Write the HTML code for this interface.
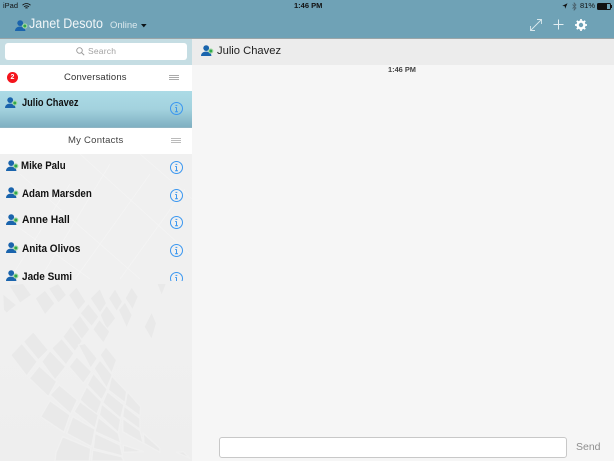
<!DOCTYPE html>
<html><head><meta charset="utf-8"><style>
html,body{margin:0;padding:0;width:614px;height:461px;overflow:hidden;background:#f6f6f6;font-family:"Liberation Sans",sans-serif}
.a{position:absolute;white-space:nowrap}
.n{font-weight:bold;font-size:11px;color:#111;line-height:14px;transform-origin:0 50%}
svg{position:absolute}
</style></head><body>
<svg width="0" height="0" style="position:absolute"><defs>
<g id="u"><circle cx="5.2" cy="3.1" r="2.9" fill="#1a64ad"/><path d="M0 11C0 7.8 2.6 6.6 5.2 6.6C7.8 6.6 10.4 7.8 10.4 11Z" fill="#1a64ad"/><circle cx="9.8" cy="6" r="2.6" fill="#a8d8a8"/><circle cx="9.8" cy="6" r="1.5" fill="#2fa84a"/></g>
<g id="i"><circle cx="6.5" cy="6.5" r="6" fill="none" stroke="#3b97f0" stroke-width="1"/><path d="M5.5 3.4H7.3M6.5 5.3V9.8M5.2 5.5H6.5M5 9.8H8" stroke="#3b97f0" stroke-width="1" fill="none"/></g>
</defs></svg>

<!-- header -->
<div class="a" style="left:0;top:0;width:614px;height:38px;background:#6fa2b6"></div>
<div class="a" style="left:0;top:38px;width:614px;height:1px;background:#9aa5a8"></div>
<div class="a" style="left:3px;top:1px;font-size:7.5px;line-height:10px;color:#111">iPad</div>
<svg style="left:22px;top:3px" width="9" height="7"><path d="M0.5 2.2C3 0 6 0 8.5 2.2M2 3.8C3.5 2.6 5.5 2.6 7 3.8M3.4 5.2C4 4.7 5 4.7 5.6 5.2" stroke="#111" fill="none" stroke-width="0.9"/></svg>
<div class="a" style="left:294px;top:1px;font-size:7.5px;line-height:10px;color:#111;font-weight:bold">1:46 PM</div>
<svg style="left:562px;top:3px" width="6" height="6"><path d="M5.5 0.3L0.3 2.9L2.8 3.2L3.1 5.7Z" fill="#111"/></svg>
<svg style="left:572px;top:2px" width="5" height="9"><path d="M0.5 2.5L4 6L2.2 8V1L4 3L0.5 6.5" stroke="#49606b" fill="none" stroke-width="0.8"/></svg>
<div class="a" style="left:580px;top:1px;font-size:7.5px;line-height:10px;color:#111">81%</div>
<div class="a" style="left:597px;top:3px;width:12px;height:5px;border:1px solid #111;border-radius:1.5px"></div>
<div class="a" style="left:598px;top:4px;width:9px;height:5px;background:#111"></div>
<div class="a" style="left:611px;top:5px;width:1px;height:3px;background:#111"></div>

<svg style="left:15px;top:20px" width="13" height="12"><use href="#u"/></svg>
<div class="a" style="left:29px;top:15px;font-size:13.5px;line-height:18px;color:#f1f6f8;transform:scaleX(.93);transform-origin:0 50%">Janet Desoto</div>
<div class="a" style="left:110px;top:20px;font-size:9.5px;line-height:12px;color:#dce9ee">Online</div>
<svg style="left:141px;top:24px" width="6" height="4"><path d="M0 0H5.6L2.8 3.4Z" fill="#0c1418"/></svg>

<svg style="left:530px;top:19px" width="12" height="12"><path d="M0.5 11.5L11.5 0.5M7 0.5H11.5V5M0.5 7V11.5H5" stroke="#d9e8ed" fill="none" stroke-width="0.9"/></svg>
<svg style="left:553px;top:19px" width="12" height="12"><path d="M5.5 0.5V10.5M0.5 5.5H10.5" stroke="#e3eef2" stroke-width="1" fill="none"/></svg>
<svg style="left:575px;top:19px" width="12" height="12"><circle cx="6" cy="6" r="3.4" fill="none" stroke="#fff" stroke-width="2.4"/><path d="M6 0V12M0 6H12M1.8 1.8L10.2 10.2M10.2 1.8L1.8 10.2" stroke="#fff" stroke-width="1.7" stroke-dasharray="2 8 2 0"/></svg>

<!-- sidebar -->
<div class="a" style="left:0;top:39px;width:192px;height:422px;background:linear-gradient(#f0f0f0,#f0f0f0 70%,#eeeeee)"></div>
<svg style="left:0;top:154px;overflow:hidden" width="192" height="126" fill="none" stroke="#f4f4f4" stroke-width=".8">
<path d="M10 125L70 30M40 125L110 10M75 125L150 20M120 125L185 35M0 60L90 125M20 20L140 125M80 0L190 100M140 0L192 45"/>
</svg>
<svg style="left:0;top:280px;overflow:hidden" width="192" height="181" viewBox="0 0 576 543">
<g fill="#e9e9e9" stroke="#f0f0f0" stroke-width="4" stroke-linejoin="round">
<path d="M8 40L50 75L20 100L10 90Z M25 15L60 70L95 45L70 10Z M105 55L135 105L165 70L135 30Z M205 45L230 20L258 65L235 92Z M145 25L175 70L200 45L175 10Z"/>
<path d="M240 100L265 70L297 110L275 140Z M270 55L300 25L320 70L300 100Z M300 105L320 75L348 115L320 150Z M355 90L375 65L397 105L380 145Z M325 55L345 25L368 65L350 95Z M375 55L395 20L415 50L398 90Z M455 95L470 130L455 180L432 140Z M470 10L500 10L485 48Z"/>
<path d="M215 135L240 105L270 148L245 180Z M278 148L298 118L330 155L310 190Z M188 170L212 138L248 182L225 215Z M155 205L185 175L222 220L198 255Z M70 185L100 155L145 210L115 240Z M32 225L65 190L112 245L80 288Z M125 245L150 212L197 260L165 300Z M88 295L118 258L170 305L145 350Z"/>
<path d="M207 260L230 230L275 275L250 310Z M235 195L255 190L292 235L272 265Z M300 225L318 200L350 240L335 280Z M282 265L300 240L337 285L320 325Z M262 315L280 280L322 328L305 360Z M335 288L380 335L375 368L325 330Z M240 360L260 320L305 365L290 405Z"/>
<path d="M150 345L178 315L232 360L212 402Z M122 410L150 362L210 405L192 457Z M222 395L240 365L295 405L285 445Z M308 368L322 335L372 375L362 415Z M382 335L422 380L420 408L375 375Z M372 378L420 415L420 448L368 410Z M298 405L305 372L362 418L355 458Z"/>
<path d="M200 460L218 410L285 448L275 500Z M285 455L295 412L355 460L362 490Z M368 415L420 452L430 490L368 455Z M430 460L480 505L480 517L432 490Z M188 470L272 505L268 543L165 543L168 518Z M285 460L360 495L368 528L280 505Z M370 495L430 515L370 517Z M278 510L365 530L372 543L275 543Z M530 517L550 515L570 535Z"/>
</g>
</svg>

<div class="a" style="left:0;top:39px;width:192px;height:26px;background:#c5dde3"></div>
<div class="a" style="left:5px;top:43px;width:182px;height:17px;background:#fff;border-radius:3px"></div>
<svg style="left:76px;top:47px" width="9" height="9"><circle cx="3.5" cy="3.5" r="2.8" fill="none" stroke="#999" stroke-width=".9"/><path d="M5.6 5.6L8.2 8.2" stroke="#999" stroke-width="1"/></svg>
<div class="a" style="left:88px;top:45px;font-size:8.5px;line-height:12px;color:#a2a2a2;letter-spacing:.2px">Search</div>

<div class="a" style="left:0;top:65px;width:192px;height:26px;background:#fff"></div>
<div class="a" style="left:7px;top:72px;width:11px;height:11px;border-radius:50%;background:#f4141c;color:#fff;font-size:7px;line-height:11px;text-align:center;font-weight:bold">2</div>
<div class="a" style="left:64px;top:71px;font-size:9.5px;line-height:13px;color:#333;letter-spacing:.15px">Conversations</div>
<div class="a" style="left:169px;top:75px;width:10px;height:1px;background:#aaa"></div>
<div class="a" style="left:169px;top:77px;width:10px;height:1px;background:#aaa"></div>
<div class="a" style="left:169px;top:79px;width:10px;height:1px;background:#aaa"></div>

<div class="a" style="left:0;top:91px;width:192px;height:36px;background:linear-gradient(#acdbe6,#a3d2de 50%,#7fb0c2)"></div>
<div class="a" style="left:0;top:127px;width:192px;height:1px;background:#8fb5c4"></div>
<svg style="left:5px;top:97px" width="13" height="12"><use href="#u"/></svg>
<div class="a n" style="left:22px;top:96px;transform:scaleX(.84)">Julio Chavez</div>
<svg style="left:170px;top:102px" width="13" height="14"><use href="#i"/></svg>

<div class="a" style="left:0;top:128px;width:192px;height:26px;background:#fff"></div>
<div class="a" style="left:68px;top:134px;font-size:9.5px;line-height:13px;color:#444;letter-spacing:.25px">My Contacts</div>
<div class="a" style="left:171px;top:138px;width:10px;height:1px;background:#bbb"></div>
<div class="a" style="left:171px;top:140px;width:10px;height:1px;background:#bbb"></div>
<div class="a" style="left:171px;top:142px;width:10px;height:1px;background:#bbb"></div>

<svg style="left:6px;top:160px" width="13" height="12"><use href="#u"/></svg>
<div class="a n" style="left:21px;top:159px;transform:scaleX(.88)">Mike Palu</div>
<svg style="left:170px;top:161px" width="13" height="14"><use href="#i"/></svg>

<svg style="left:6px;top:187px" width="13" height="12"><use href="#u"/></svg>
<div class="a n" style="left:22px;top:187px;transform:scaleX(.885)">Adam Marsden</div>
<svg style="left:170px;top:189px" width="13" height="14"><use href="#i"/></svg>

<svg style="left:6px;top:214px" width="13" height="12"><use href="#u"/></svg>
<div class="a n" style="left:22px;top:213px;transform:scaleX(.94)">Anne Hall</div>
<svg style="left:170px;top:216px" width="13" height="14"><use href="#i"/></svg>

<svg style="left:6px;top:242px" width="13" height="12"><use href="#u"/></svg>
<div class="a n" style="left:22px;top:242px;transform:scaleX(.91)">Anita Olivos</div>
<svg style="left:170px;top:244px" width="13" height="14"><use href="#i"/></svg>

<svg style="left:6px;top:270px" width="13" height="12"><use href="#u"/></svg>
<div class="a n" style="left:22px;top:270px;transform:scaleX(.91)">Jade Sumi</div>
<div class="a" style="left:170px;top:272px;width:14px;height:9px;overflow:hidden"><svg style="left:0;top:0" width="13" height="14"><use href="#i"/></svg></div>

<!-- main -->
<div class="a" style="left:192px;top:39px;width:422px;height:26px;background:#ececec"></div>
<svg style="left:201px;top:45px" width="13" height="12"><use href="#u"/></svg>
<div class="a" style="left:217px;top:44px;font-size:11.2px;line-height:15px;color:#222">Julio Chavez</div>
<div class="a" style="left:388px;top:65px;font-size:7.4px;line-height:10px;color:#444;font-weight:bold">1:46 PM</div>

<div class="a" style="left:219px;top:437px;width:346px;height:19px;background:#fff;border:1px solid #c8c8c8;border-radius:3px"></div>
<div class="a" style="left:576px;top:440px;font-size:10.5px;line-height:14px;color:#8e8e8e">Send</div>
</body></html>
